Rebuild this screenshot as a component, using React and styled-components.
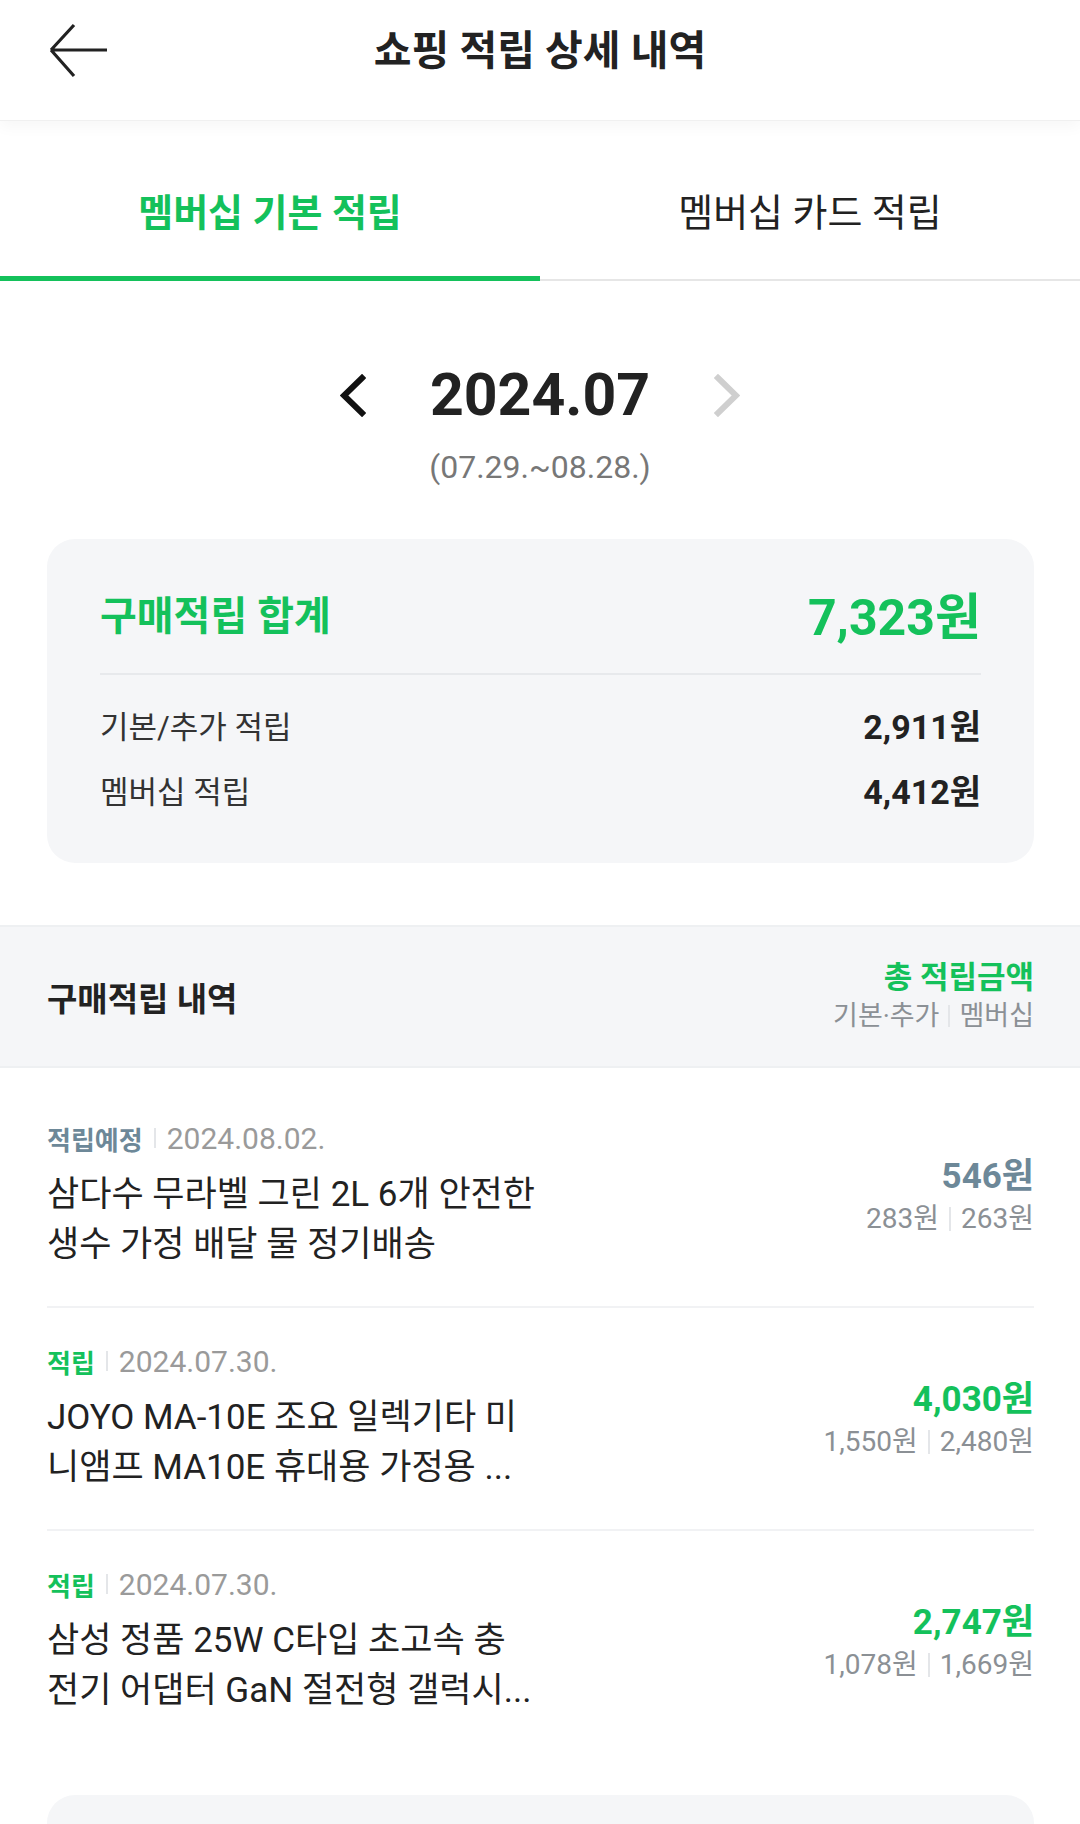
import React from "react";
import styled, { createGlobalStyle } from "styled-components";

const GREEN = "#14c15b";
const SLATE = "#6d8898";

const GlobalStyle = createGlobalStyle`
  html, body {
    margin: 0;
    padding: 0;
    background: #ffffff;
  }
  body {
    font-family: Roboto, "Noto Sans CJK KR", sans-serif;
    color: #222;
    overflow: hidden;
  }
  * {
    box-sizing: border-box;
  }
`;

const Page = styled.div`
  width: 1080px;
  background: #fff;
`;

const Header = styled.header`
  position: relative;
  z-index: 1;
  height: 121px;
  padding-bottom: 18px;
  display: grid;
  grid-template-columns: 1fr auto 1fr;
  align-items: center;
  background: #fff;
  border-bottom: 1px solid #f0f0f0;
  box-shadow: 0 6px 14px rgba(0, 0, 0, 0.035);
`;

const BackButton = styled.button`
  justify-self: start;
  margin-left: 44px;
  width: 68px;
  height: 60px;
  padding: 0;
  border: 0;
  background: none;
  display: flex;
  align-items: center;
  justify-content: center;
`;

const Title = styled.h1`
  margin: 0;
  font-size: 41px;
  line-height: 50px;
  font-weight: 700;
  color: #222;
`;

const TabBar = styled.nav`
  display: flex;
  box-shadow: inset 0 -2px 0 #e6e6e6;
`;

const Tab = styled.div`
  flex: 1;
  height: 160px;
  padding-top: 72px;
  text-align: center;
  font-size: 38px;
  line-height: 40px;
  font-weight: ${(p) => (p.$active ? 700 : 400)};
  color: ${(p) => (p.$active ? GREEN : "#222")};
  box-shadow: ${(p) => (p.$active ? `inset 0 -5px 0 ${GREEN}` : "none")};
`;

const MonthRow = styled.div`
  margin-top: 78px;
  display: flex;
  align-items: center;
  justify-content: center;
  gap: 64px;
`;

const Month = styled.div`
  font-size: 59px;
  line-height: 72px;
  font-weight: 700;
  color: #222;
`;

const Period = styled.div`
  margin-top: 18px;
  text-align: center;
  font-size: 32px;
  line-height: 36px;
  color: #777;
`;

const SummaryCard = styled.section`
  margin: 54px 46px 0 47px;
  padding: 49px 53px 54px;
  border-radius: 28px;
  background: #f5f6f8;
`;

const SummaryHead = styled.div`
  display: flex;
  justify-content: space-between;
  align-items: center;
  height: 50px;
  color: ${GREEN};
  font-weight: 700;
`;

const SummaryLabel = styled.span`
  font-size: 40px;
`;

const SummaryTotal = styled.span`
  font-size: 50px;
`;

const Divider = styled.hr`
  margin: 35px 0 29px;
  border: 0;
  height: 2px;
  background: #e7e9ec;
`;

const SummaryRow = styled.div`
  display: flex;
  justify-content: space-between;
  align-items: center;
  height: 40px;
  & + & {
    margin-top: 25px;
  }
`;

const RowLabel = styled.span`
  font-size: 31px;
  color: #333;
`;

const RowValue = styled.span`
  font-size: 34px;
  font-weight: 700;
  color: #222;
`;

const Band = styled.div`
  margin-top: 62px;
  height: 143px;
  padding: 0 46px 0 47px;
  display: flex;
  justify-content: space-between;
  align-items: center;
  background: #f5f6f8;
  border-top: 2px solid #eef0f2;
  border-bottom: 2px solid #eef0f2;
`;

const BandTitle = styled.h2`
  margin: 0;
  font-size: 33px;
  font-weight: 700;
  color: #222;
`;

const BandLegend = styled.div`
  text-align: right;
`;

const LegendTitle = styled.div`
  font-size: 31px;
  line-height: 36px;
  font-weight: 700;
  color: ${GREEN};
`;

const LegendSub = styled.div`
  margin-top: 2px;
  display: flex;
  justify-content: flex-end;
  align-items: center;
  font-size: 27px;
  line-height: 36px;
  color: #8b9095;
`;

const Sep = styled.i`
  display: inline-block;
  width: 2px;
  height: ${(p) => p.$h || 20}px;
  margin: 0 ${(p) => p.$m || 10}px;
  background: #e4e6e9;
`;

const List = styled.ul`
  list-style: none;
  margin: 0;
  padding: 17px 46px 0 47px;
`;

const Item = styled.li`
  display: flex;
  justify-content: space-between;
  align-items: center;
  padding: 38px 0 36px;
  border-bottom: 2px solid #f1f2f4;
  &:last-child {
    border-bottom: 0;
  }
`;

const ItemMain = styled.div`
  display: flex;
  flex-direction: column;
`;

const Status = styled.div`
  display: flex;
  align-items: center;
  height: 30px;
`;

const StatusLabel = styled.span`
  font-size: 26px;
  font-weight: 700;
  color: ${(p) => (p.$pending ? SLATE : GREEN)};
`;

const StatusDate = styled.span`
  font-size: 30px;
  color: #9a9a9a;
`;

const ItemTitle = styled.div`
  margin-top: 17px;
  font-size: 35px;
  line-height: 50px;
  color: #222;
  white-space: nowrap;
`;

const ItemAmounts = styled.div`
  text-align: right;
`;

const Amount = styled.div`
  font-size: 35px;
  line-height: 40px;
  font-weight: 700;
  color: ${(p) => (p.$pending ? SLATE : GREEN)};
`;

const AmountSplit = styled.div`
  margin-top: 4px;
  display: flex;
  justify-content: flex-end;
  align-items: center;
  font-size: 28px;
  line-height: 36px;
  color: #8b9095;
`;

const BottomCard = styled.div`
  margin: 43px 46px 0 47px;
  height: 140px;
  border-radius: 28px;
  background: #f5f6f8;
`;

const items = [
  {
    pending: true,
    label: "적립예정",
    date: "2024.08.02.",
    lines: ["삼다수 무라벨 그린 2L 6개 안전한", "생수 가정 배달 물 정기배송"],
    total: "546원",
    base: "283원",
    member: "263원",
  },
  {
    label: "적립",
    date: "2024.07.30.",
    lines: ["JOYO MA-10E 조요 일렉기타 미", "니앰프 MA10E 휴대용 가정용 ..."],
    total: "4,030원",
    base: "1,550원",
    member: "2,480원",
  },
  {
    label: "적립",
    date: "2024.07.30.",
    lines: ["삼성 정품 25W C타입 초고속 충", "전기 어댑터 GaN 절전형 갤럭시..."],
    total: "2,747원",
    base: "1,078원",
    member: "1,669원",
  },
];

function Chevron({ dir, color }) {
  const pts = dir === "left" ? "22,4 4,21.5 22,39" : "4,4 22,21.5 4,39";
  return (
    <svg width="26" height="43" viewBox="0 0 26 43">
      <polyline
        points={pts}
        fill="none"
        stroke={color}
        strokeWidth="6"
        strokeLinecap="square"
      />
    </svg>
  );
}

export default function App() {
  return (
    <Page>
      <GlobalStyle />
      <Header>
        <BackButton aria-label="뒤로">
          <svg width="62" height="56" viewBox="0 0 62 56">
            <path
              d="M60 27H4M4 27L27 2M4 27L27 53"
              fill="none"
              stroke="#222"
              strokeWidth="3.2"
            />
          </svg>
        </BackButton>
        <Title>쇼핑 적립 상세 내역</Title>
        <span />
      </Header>

      <TabBar>
        <Tab $active>멤버십 기본 적립</Tab>
        <Tab>멤버십 카드 적립</Tab>
      </TabBar>

      <MonthRow>
        <Chevron dir="left" color="#111" />
        <Month>2024.07</Month>
        <Chevron dir="right" color="#cfcfcf" />
      </MonthRow>
      <Period>(07.29.~08.28.)</Period>

      <SummaryCard>
        <SummaryHead>
          <SummaryLabel>구매적립 합계</SummaryLabel>
          <SummaryTotal>7,323원</SummaryTotal>
        </SummaryHead>
        <Divider />
        <SummaryRow>
          <RowLabel>기본/추가 적립</RowLabel>
          <RowValue>2,911원</RowValue>
        </SummaryRow>
        <SummaryRow>
          <RowLabel>멤버십 적립</RowLabel>
          <RowValue>4,412원</RowValue>
        </SummaryRow>
      </SummaryCard>

      <Band>
        <BandTitle>구매적립 내역</BandTitle>
        <BandLegend>
          <LegendTitle>총 적립금액</LegendTitle>
          <LegendSub>
            기본·추가
            <Sep $h={22} $m={9} />
            멤버십
          </LegendSub>
        </BandLegend>
      </Band>

      <List>
        {items.map((it, i) => (
          <Item key={i}>
            <ItemMain>
              <Status>
                <StatusLabel $pending={it.pending}>{it.label}</StatusLabel>
                <Sep $h={20} $m={11} />
                <StatusDate>{it.date}</StatusDate>
              </Status>
              <ItemTitle>
                {it.lines[0]}
                <br />
                {it.lines[1]}
              </ItemTitle>
            </ItemMain>
            <ItemAmounts>
              <Amount $pending={it.pending}>{it.total}</Amount>
              <AmountSplit>
                {it.base}
                <Sep $h={24} $m={10} />
                {it.member}
              </AmountSplit>
            </ItemAmounts>
          </Item>
        ))}
      </List>

      <BottomCard />
    </Page>
  );
}
